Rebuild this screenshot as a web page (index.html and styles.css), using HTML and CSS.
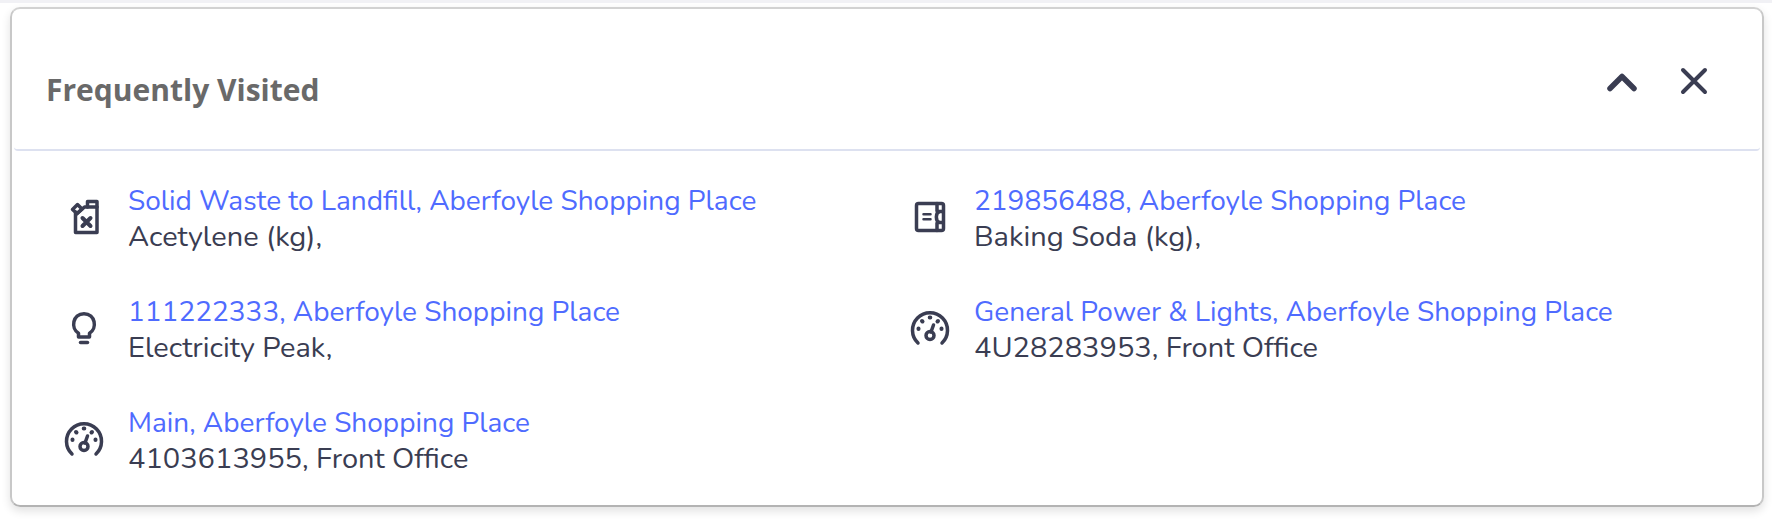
FILE: index.html
```html
<!DOCTYPE html>
<html lang="en">
  <head>
    <meta charset="UTF-8" />
    <title>Frequently Visited</title>
    <link rel="stylesheet" href="styles.css">
  </head>
  <body>

    <!-- Shared icon shapes -->
    <svg class="sprite" aria-hidden="true">
      <symbol id="gauge" viewBox="0 0 40 40">
        <path class="line" d="M8 35A17.500 17.500 0 1 1 32 35" />
        <path class="line" d="M21 24L23.500 17" />
        <circle class="line" cx="20" cy="27.500" r="4" />
        <path class="dot" d="M19.700 9.500h.6M12 13l.5.5M28 13l-.5.500M8.500 20.500v.6M31.500 20.500v.6" />
      </symbol>
    </svg>

    <div class="topbar"></div>

    <section class="card">
      <div class="card-header">
        <h2>Frequently Visited</h2>
        <div class="actions">
          <button type="button" aria-label="Collapse">
            <svg width="32" height="32" viewBox="0 0 32 32">
              <path class="chevron" d="M4 23.5L16 11.5L28 23.5" />
            </svg>
          </button>
          <button type="button" aria-label="Close">
            <svg width="32" height="32" viewBox="0 0 32 32">
              <path class="cross" d="M5 5L27 27M27 5L5 27" />
            </svg>
          </button>
        </div>
      </div>

      <ul class="list">
        <li class="item">
          <!-- fuel can -->
          <svg class="icon" viewBox="0 0 40 40">
            <path class="line" d="M11.500 15V35.500H33V10H20.500L11.500 18" />
            <path class="line" d="M23.500 10V4.500H33V10" />
            <path class="line" d="M13.500 7.500L18 12L13 16.500L8.500 12.500Z" />
            <path class="cross" d="M18.500 21L26.500 29M26.500 21L18.500 29" />
          </svg>
          <div class="text">
            <a href="#">Solid Waste to Landfill, Aberfoyle Shopping Place</a>
            <span>Acetylene (kg),</span>
          </div>
        </li>
        <li class="item">
          <!-- meter box -->
          <svg class="icon" viewBox="0 0 40 40">
            <rect class="line" x="6.500" y="6.500" width="27" height="27" rx="2" />
            <path class="line" d="M27 6.500V14M27 26V33.500M33 14.500H29.500C25.300 16 25.300 24 29.500 25.500H33" />
            <path class="thin" d="M13.500 17.200H20.500M13.500 22.300H20.500" />
          </svg>
          <div class="text">
            <a href="#">219856488, Aberfoyle Shopping Place</a>
            <span>Baking Soda (kg),</span>
          </div>
        </li>
        <li class="item">
          <!-- light bulb -->
          <svg class="icon" viewBox="0 0 40 40">
            <path class="line" d="M14.500 29V25.300C6.500 20.500 8.500 5.700 20 5.700S33.500 20.500 25.500 25.300V29Z" />
            <path class="line" d="M16.500 34.500H23.500" />
          </svg>
          <div class="text">
            <a href="#">111222333, Aberfoyle Shopping Place</a>
            <span>Electricity Peak,</span>
          </div>
        </li>
        <li class="item">
          <svg class="icon"><use href="#gauge" /></svg>
          <div class="text">
            <a href="#">General Power &amp; Lights, Aberfoyle Shopping Place</a>
            <span>4U28283953, Front Office</span>
          </div>
        </li>
        <li class="item">
          <svg class="icon"><use href="#gauge" /></svg>
          <div class="text">
            <a href="#">Main, Aberfoyle Shopping Place</a>
            <span>4103613955, Front Office</span>
          </div>
        </li>
      </ul>
    </section>

  </body>
</html>
```
FILE: styles.css
```css
* {
  box-sizing: border-box;
}

body {
  margin: 0;
  min-height: 100vh;
  font-family: Nunito, Lato, sans-serif;
  font-size: 28px;
  line-height: 35px;
  color: #3a3d52;
  background-color: white;
}

.sprite {
  display: none;
}

.topbar {
  height: 3px;
  background-color: #f1f1f5;
}

.card {
  margin: 4px 8px 0 10px;
  border: 2px solid #c8c8c8;
  border-top-color: #d2d2d2;
  border-bottom-color: #b3b3b3;
  border-radius: 10px;
  box-shadow: 0 4px 10px rgba(0, 0, 0, 0.12);
}

.card-header {
  display: flex;
  justify-content: space-between;
  align-items: center;
  height: 142px;
  margin: 0 2px;
  padding: 0 50px 0 32px;
  border-bottom: 2px solid #dde1f0;
  border-radius: 4px;
}

.card-header h2 {
  margin: 20px 0 0;
  font-family: "Trebuchet MS", "Open Sans", sans-serif;
  font-size: 30px;
  font-weight: bold;
  color: #696969;
}

.actions {
  display: flex;
  gap: 40px;
  padding-top: 4px;
}

button {
  display: flex;
  padding: 0;
  border: none;
  background: none;
  cursor: pointer;
}

.list {
  display: grid;
  grid-template-columns: 1fr 1fr;
  gap: 41px 0;
  margin: 0;
  padding: 33px 6px 29px 52px;
  list-style: none;
}

.item {
  display: flex;
  align-items: center;
  gap: 24px;
}

.text {
  display: flex;
  flex-direction: column;
  align-items: flex-start;
}

.text a {
  color: #4f6bff;
  text-decoration: none;
}

.text span {
  font-size: 29px;
}

.icon {
  flex: none;
  width: 40px;
  height: 40px;
  margin-bottom: 4px;
}

svg {
  fill: none;
  stroke: #3a3d52;
  stroke-linecap: round;
  stroke-linejoin: round;
}

.line {
  stroke-width: 3.5;
}

.thin {
  stroke-width: 2.5;
}

.dot {
  stroke-width: 4;
}

.cross {
  stroke-width: 4;
}

.chevron {
  stroke-width: 5.5;
}
```
